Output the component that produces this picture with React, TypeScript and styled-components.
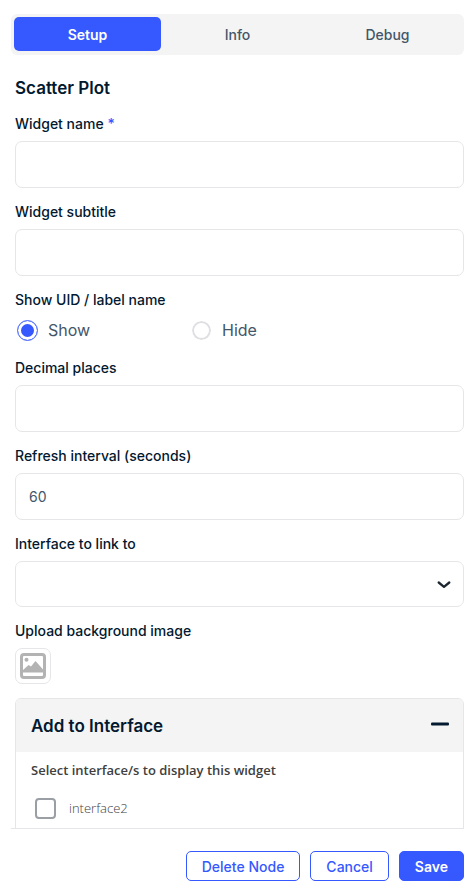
import React, { useState } from "react";
import styled, { createGlobalStyle } from "styled-components";

const blue = "#3658ff";
const navy = "#03192f";
const slate = "#43566a";
const line = "#e6e6e8";
const panel = "#f4f4f4";

const GlobalStyle = createGlobalStyle`
  *, *::before, *::after { box-sizing: border-box; }
  body { margin: 0; background: #fff; font-family: Inter, sans-serif; color: ${navy}; }
  button, input, select { font: inherit; color: inherit; margin: 0; }
`;

const Page = styled.form`
  display: flex;
  flex-direction: column;
  height: 100vh;
  padding: 14px 9px 8px 11px;
`;

const TabBar = styled.div`
  display: flex;
  flex: none;
  gap: 3px;
  padding: 3px 3px 4px;
  border-radius: 6px;
  background: ${panel};
`;

const Tab = styled.button<{ $active: boolean }>`
  flex: 1;
  height: 34px;
  padding: 0;
  border: 0;
  border-radius: 5px;
  cursor: pointer;
  font-size: 14px;
  font-weight: ${(p) => (p.$active ? 600 : 500)};
  background: ${(p) => (p.$active ? blue : "transparent")};
  && { color: ${(p) => (p.$active ? "#fff" : slate)}; }
`;

const Content = styled.div`
  flex: 1;
  min-height: 0;
  overflow-y: auto;
  scrollbar-width: none;
  display: flex;
  flex-direction: column;
  gap: 14px;
  padding: 22px 0 0 4px;
  > * { flex: none; }
`;

const Heading = styled.h2`
  margin: 0;
  font-size: 17px;
  line-height: 23px;
  font-weight: 600;
`;

const Field = styled.div`
  display: flex;
  flex-direction: column;
  gap: 7px;
`;

const Label = styled.label`
  font-size: 14px;
  line-height: 20px;
  font-weight: 500;
`;

const Required = styled.span`
  color: ${blue};
`;

const TextInput = styled.input`
  width: 100%;
  height: 47px;
  padding: 0 13px;
  border: 1px solid ${line};
  border-radius: 7px;
  background: #fff;
  font-size: 14px;
  && { color: ${slate}; }
`;

const SelectWrap = styled.div`
  position: relative;
`;

const Select = styled.select`
  display: block;
  width: 100%;
  height: 46px;
  padding: 0 40px 0 13px;
  border: 1px solid ${line};
  border-radius: 7px;
  background: #fff;
  appearance: none;
  font-size: 14px;
`;

const Chevron = styled.svg`
  position: absolute;
  right: 12px;
  top: 15px;
  pointer-events: none;
`;

const RadioField = styled.fieldset`
  min-width: 0;
  margin: 0;
  padding: 0;
  border: 0;
`;

const Legend = styled.legend`
  padding: 0;
  font-size: 14px;
  line-height: 20px;
  font-weight: 500;
`;

const RadioRow = styled.div`
  display: flex;
  padding: 8px 0 2px 2px;
`;

const RadioLabel = styled.label`
  display: flex;
  align-items: center;
  gap: 10px;
  width: 174px;
  font-size: 16px;
  line-height: 24px;
  color: ${slate};
`;

const Radio = styled.input`
  appearance: none;
  width: 21px;
  height: 21px;
  border: 1px solid #fff;
  border-radius: 50%;
  box-shadow: inset 0 0 0 2px #dfdfe3;
  &:checked {
    border: 1px solid #5a76ff;
    background: ${blue};
    box-shadow: inset 0 0 0 3px #fff;
  }
`;

const Upload = styled.button`
  display: flex;
  align-items: center;
  justify-content: center;
  width: 36px;
  height: 36px;
  padding: 0;
  border: 1px solid ${line};
  border-radius: 7px;
  background: #fff;
`;

const Accordion = styled.section`
  border: 1px solid ${line};
  border-radius: 6px 6px 0 0;
  overflow: hidden;
`;

const AccordionHeader = styled.button`
  display: flex;
  align-items: center;
  justify-content: space-between;
  width: 100%;
  height: 53px;
  padding: 0 14px 0 15px;
  border: 0;
  background: ${panel};
  text-align: left;
  && { font-size: 17px; font-weight: 600; }
`;

const Minus = styled.svg`
  margin-bottom: 4px;
`;

const AccordionBody = styled.div`
  padding: 9px 15px 20px;
  font-family: "Open Sans", sans-serif;
  color: #404040;
`;

const Hint = styled.p`
  margin: 0 0 19px;
  font-size: 13px;
  line-height: 18px;
  font-weight: 600;
`;

const CheckLabel = styled.label`
  display: flex;
  align-items: center;
  gap: 13px;
  padding-left: 4px;
  font-size: 13px;
  line-height: 21px;
  font-weight: 300;
`;

const Checkbox = styled.input`
  appearance: none;
  width: 21px;
  height: 21px;
  border: 2px solid #9a9fa5;
  border-radius: 4px;
  &:checked { background: ${blue}; border-color: ${blue}; }
`;

const Footer = styled.footer`
  display: flex;
  flex: none;
  justify-content: flex-end;
  gap: 10px;
  padding-top: 22px;
  border-top: 1px solid ${line};
`;

const Action = styled.button<{ $primary?: boolean }>`
  height: 30px;
  padding: 0 15px;
  border: 1px solid ${blue};
  border-radius: 5px;
  cursor: pointer;
  font-size: 14px;
  font-weight: ${(p) => (p.$primary ? 600 : 500)};
  background: ${(p) => (p.$primary ? blue : "#fff")};
  && { color: ${(p) => (p.$primary ? "#fff" : blue)}; }
`;

const tabs = ["Setup", "Info", "Debug"];

export default function App() {
  const [tab, setTab] = useState("Setup");
  const [open, setOpen] = useState(true);

  return (
    <>
      <GlobalStyle />
      <Page onSubmit={(e) => e.preventDefault()}>
        <TabBar role="tablist">
          {tabs.map((name) => (
            <Tab key={name} type="button" role="tab" aria-selected={tab === name} $active={tab === name} onClick={() => setTab(name)}>
              {name}
            </Tab>
          ))}
        </TabBar>

        <Content>
          <Heading>Scatter Plot</Heading>
          <Field>
            <Label htmlFor="name">Widget name <Required>*</Required></Label>
            <TextInput id="name" />
          </Field>
          <Field>
            <Label htmlFor="subtitle">Widget subtitle</Label>
            <TextInput id="subtitle" />
          </Field>
          <RadioField>
            <Legend>Show UID / label name</Legend>
            <RadioRow>
              <RadioLabel><Radio type="radio" name="uid" defaultChecked />Show</RadioLabel>
              <RadioLabel><Radio type="radio" name="uid" />Hide</RadioLabel>
            </RadioRow>
          </RadioField>
          <Field>
            <Label htmlFor="decimals">Decimal places</Label>
            <TextInput id="decimals" />
          </Field>
          <Field>
            <Label htmlFor="refresh">Refresh interval (seconds)</Label>
            <TextInput id="refresh" defaultValue="60" />
          </Field>
          <Field>
            <Label htmlFor="link">Interface to link to</Label>
            <SelectWrap>
              <Select id="link" defaultValue="">
                <option value="" />
                <option value="interface2">interface2</option>
              </Select>
              <Chevron width="16" height="16" viewBox="0 0 16 16" fill="none" stroke="#1c2630" strokeWidth="2.3" strokeLinecap="round" strokeLinejoin="round">
                <path d="M2.7 6.5 8 10.8 13.3 6.5" />
              </Chevron>
            </SelectWrap>
          </Field>
          <Field>
            <Label as="span" id="upload-label">Upload background image</Label>
            <Upload type="button" aria-labelledby="upload-label">
              <svg width="26" height="26" viewBox="0 0 26 26" fill="none">
                <rect x="1.5" y="1.5" width="23" height="23" rx="2.5" stroke="#b3b3b3" strokeWidth="3" />
                <circle cx="6.5" cy="6.8" r="2" fill="#b3b3b3" />
                <path d="M2.5 19.5V17.5L8.5 12 11 13.5 15.5 8 23.5 17V19.5Z" fill="#b3b3b3" />
              </svg>
            </Upload>
          </Field>
          <Accordion>
            <AccordionHeader type="button" aria-expanded={open} onClick={() => setOpen(!open)}>
              Add to Interface
              <Minus width="18" height="4" viewBox="0 0 18 4">
                <rect y="0.5" width="18" height="3" rx="1" fill={navy} />
              </Minus>
            </AccordionHeader>
            {open && (
              <AccordionBody>
                <Hint>Select interface/s to display this widget</Hint>
                <CheckLabel><Checkbox type="checkbox" />interface2</CheckLabel>
              </AccordionBody>
            )}
          </Accordion>
        </Content>

        <Footer>
          <Action type="button">Delete Node</Action>
          <Action type="button">Cancel</Action>
          <Action type="submit" $primary>Save</Action>
        </Footer>
      </Page>
    </>
  );
}
